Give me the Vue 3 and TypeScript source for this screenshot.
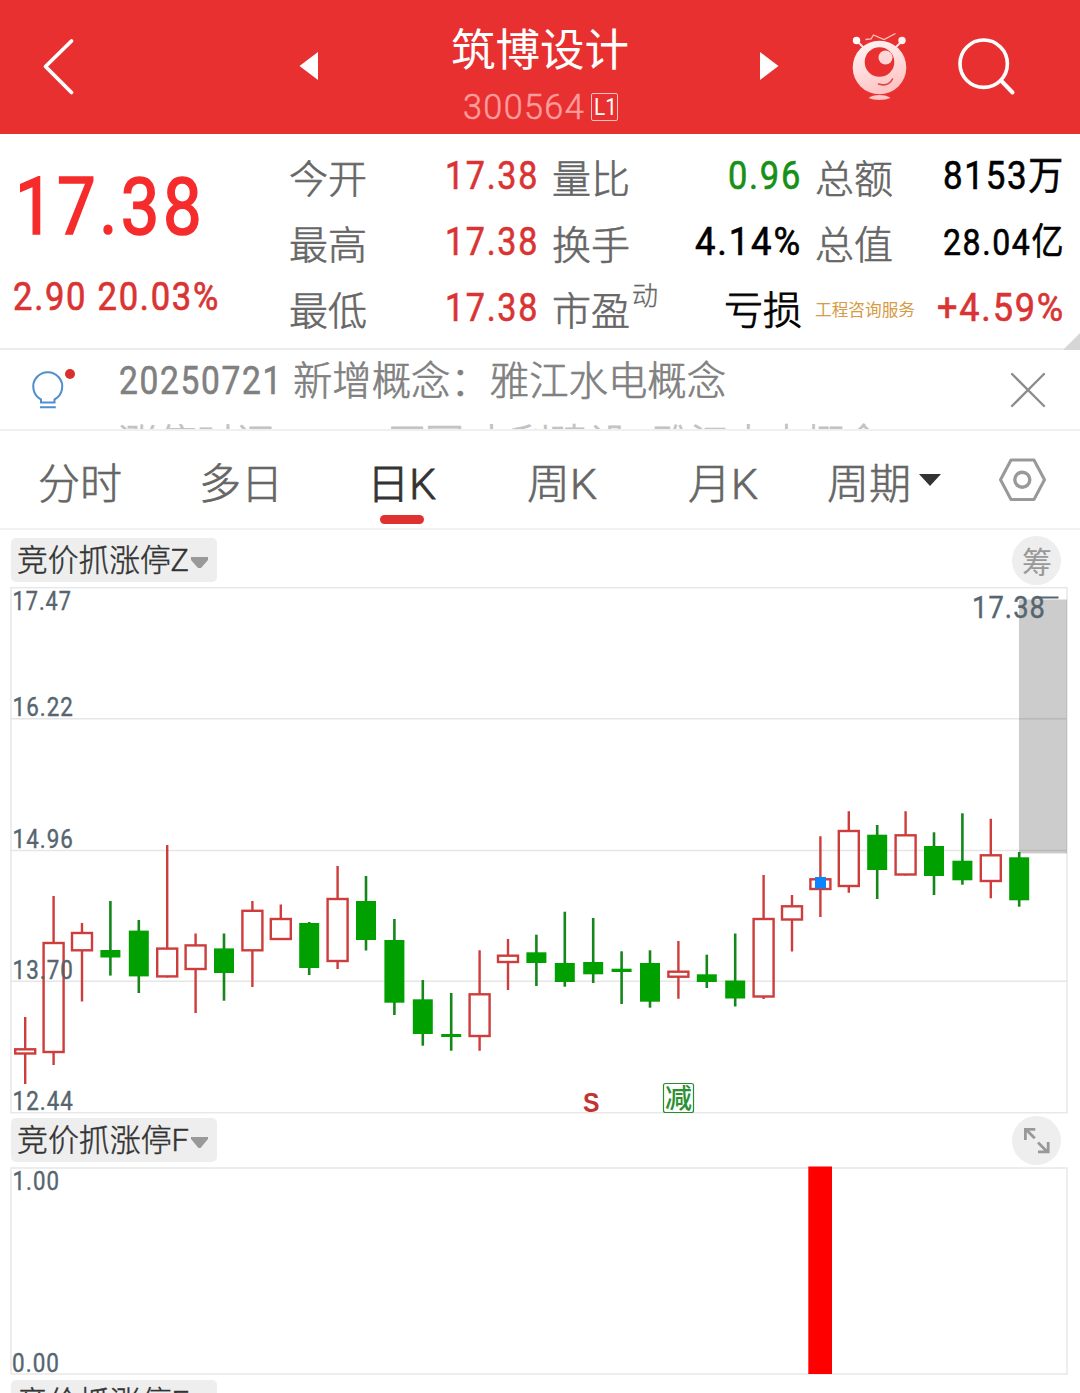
<script setup lang="ts">
import { h } from 'vue'

interface FitProps {
  t: string
  w: number
  h: number
  y: number
  s: number
  wt?: number
  k?: number
  ls?: number
}

// One line of text set to an exact advance width, with baseline y inside a box of w x h.
// k thickens the strokes (in em), ls is the letter spacing (in em).
const Fit = (p: FitProps) =>
  h('svg', { width: p.w, height: p.h, style: 'display:block;flex:none;overflow:visible' }, [
    h('text', {
      x: 0,
      y: p.y,
      'font-size': p.s,
      'font-weight': p.wt ?? 400,
      fill: 'currentColor',
      stroke: p.k ? 'currentColor' : 'none',
      'stroke-width': (p.k ?? 0) * p.s,
      'letter-spacing': (p.ls ?? 0) * p.s,
      textLength: p.w,
      lengthAdjust: 'spacingAndGlyphs',
    }, p.t),
  ])
Fit.props = ['t', 'w', 'h', 'y', 's', 'wt', 'k', 'ls']

interface Stat {
  label: string
  value: string
  w: number
  tone: string
  size?: number
  sup?: string
  tag?: boolean
  cjk?: boolean
}

const columns: Stat[][] = [
  [
    { label: '今开', value: '17.38', w: 94, tone: 'up' },
    { label: '最高', value: '17.38', w: 94, tone: 'up' },
    { label: '最低', value: '17.38', w: 94, tone: 'up' },
  ],
  [
    { label: '量比', value: '0.96', w: 74, tone: 'down' },
    { label: '换手', value: '4.14%', w: 107, tone: 'flat' },
    { label: '市盈', sup: '动', value: '亏损', w: 78, tone: 'flat', cjk: true },
  ],
  [
    { label: '总额', value: '8153万', w: 122, tone: 'flat' },
    { label: '总值', value: '28.04亿', w: 122, tone: 'flat', size: 37 },
    { label: '工程咨询服务', value: '+4.59%', w: 128, tone: 'up', tag: true },
  ],
]

const tabs = [
  { name: '分时', w: 84, left: 38 },
  { name: '多日', w: 84, left: 77 },
  { name: '日K', w: 69, left: 84, active: true },
  { name: '周K', w: 70, left: 91 },
  { name: '月K', w: 70, left: 91 },
  { name: '周期', w: 84, left: 69 },
]

// direction, high, body top, body bottom, low (chart pixel rows)
type Candle = ['r' | 'g', number, number, number, number]
const candles: Candle[] = [
  ['r', 1017, 1048.3, 1054.5, 1084],
  ['r', 896, 942, 1053, 1065],
  ['r', 923, 932, 951.3, 1001.5],
  ['g', 901, 950, 957.5, 975.6],
  ['g', 920, 930.6, 976.4, 993],
  ['r', 845, 947.6, 977.4, 977],
  ['r', 933.5, 944.4, 970, 1013],
  ['g', 933.5, 948.4, 973, 1000.7],
  ['r', 901, 909.8, 951.3, 987],
  ['r', 904.4, 918, 940, 940],
  ['g', 922, 923, 968, 975],
  ['r', 866, 898, 962, 969],
  ['g', 876, 901, 940, 950.5],
  ['g', 919, 940, 1002.7, 1015],
  ['g', 980, 999.3, 1034, 1045.7],
  ['g', 993, 1034, 1037, 1050.7],
  ['r', 950.3, 993.3, 1037, 1050.7],
  ['r', 939, 954.7, 963, 990],
  ['g', 934.7, 952.3, 963, 986],
  ['g', 911.7, 963, 982, 986.7],
  ['g', 918, 962, 974.3, 983],
  ['g', 951.3, 968.7, 972, 1004],
  ['g', 950.3, 963, 1001.7, 1007.7],
  ['r', 941, 970.7, 977.7, 998.7],
  ['g', 954.7, 974.3, 982, 988],
  ['g', 933.5, 980.5, 998.5, 1006.5],
  ['r', 875, 918, 997.5, 999],
  ['r', 895, 905.3, 920.5, 951.5],
  ['r', 836.3, 878.3, 890, 917],
  ['r', 811.3, 830, 887, 892.7],
  ['g', 825, 834.7, 870, 899],
  ['r', 811.3, 834.3, 875.5, 875.5],
  ['g', 832.3, 846, 876, 895],
  ['g', 813.3, 860.7, 880.3, 884.7],
  ['r', 818.7, 854.3, 882, 898.3],
  ['g', 852, 857.3, 900.3, 906.7],
]
const cx = (i: number) => 25.2 + i * 28.4

const prices = [
  { t: '17.47', y: 610, w: 59.5 },
  { t: '16.22', y: 716, w: 61.5 },
  { t: '14.96', y: 848, w: 61.5 },
  { t: '13.70', y: 979, w: 61.5 },
  { t: '12.44', y: 1110, w: 61.5 },
]
</script>

<template>
  <main class="page">
    <header class="top">
      <svg class="back" width="34" height="60" viewBox="42 37 34 60">
        <path d="M71.5 41 45.500 66.500 71.500 92.500" fill="none" stroke="#fff" stroke-width="3.8" stroke-linecap="round" stroke-linejoin="round" />
      </svg>
      <svg class="prev" width="20" height="30" viewBox="0 0 20 30"><path d="M0.500 15 19 1V29Z" fill="#fff" /></svg>
      <div class="title">
        <Fit t="筑博设计" :w="178" :h="78" :y="66" :s="44.500" />
        <div class="code">
          <Fit class="digits" t="300564" :w="122" :h="34" :y="24.500" :s="35" :wt="300" :k="0.015" :ls="0.04" />
          <span class="level"><Fit t="L1" :w="23" :h="26" :y="21" :s="24" /></span>
        </div>
      </div>
      <svg class="next" width="20" height="30" viewBox="0 0 20 30"><path d="M18.500 15 0 1V29Z" fill="#fff" /></svg>
      <svg class="mascot" width="60" height="72" viewBox="850 30 60 72">
        <defs>
          <linearGradient id="skin" x1="0.2" y1="0" x2="0.6" y2="1">
            <stop offset="0" stop-color="#fff4f4" />
            <stop offset="0.5" stop-color="#ffdcdc" />
            <stop offset="1" stop-color="#ffc0c0" />
          </linearGradient>
        </defs>
        <path d="M865.500 39.500 871 39 873.500 35 884 39.500 895.500 33.500" fill="none" stroke="#ffc4c4" stroke-width="1.3" />
        <path d="M857 41 865 49M902 41 894 49" stroke="#ffe4e4" stroke-width="2" />
        <circle cx="856.500" cy="40.500" r="3.700" fill="#fff" />
        <circle cx="902" cy="40.500" r="3.700" fill="#fff0f0" />
        <circle cx="879.500" cy="67.500" r="26.800" fill="url(#skin)" />
        <circle cx="879.500" cy="62" r="14.800" fill="#e83030" />
        <circle cx="885.500" cy="57.500" r="7" fill="#ffd6d6" />
        <path d="M878.500 84Q888.500 87 892.500 79" fill="none" stroke="#d84848" stroke-width="1.600" stroke-linecap="round" />
        <path d="M868.500 98Q872 95 879.500 95T890.500 98Q886 100 879.500 100T868.500 98Z" fill="#ffc4c4" />
      </svg>
      <svg class="search" width="60" height="60" viewBox="956 36 60 60">
        <circle cx="983.700" cy="63.700" r="23.700" fill="none" stroke="#fff" stroke-width="3.600" />
        <path d="M1001 80.500 1012.500 92.500" stroke="#fff" stroke-width="4" stroke-linecap="round" />
      </svg>
    </header>

    <section class="quote">
      <div class="last up">
        <Fit class="big" t="17.38" :w="190" :h="134" :y="99.500" :s="79" :k="0.022" :ls="0.05" />
        <Fit class="chg" t="2.90 20.03%" :w="207" :h="60" :y="42" :s="38.500" :k="0.018" :ls="0.05" />
      </div>
      <div v-for="(col, c) in columns" :key="c" class="col">
        <div v-for="s in col" :key="s.label" class="stat">
          <Fit v-if="s.tag" class="tag" :t="s.label" :w="100" :h="66" :y="39" :s="16.600" />
          <div v-else class="label">
            <Fit :t="s.label" :w="78" :h="66" :y="47.500" :s="39" :wt="300" :k="0.016" />
            <Fit v-if="s.sup" :t="s.sup" :w="26" :h="66" :y="27.500" :s="26" :wt="300" :k="0.012" />
          </div>
          <Fit v-if="s.cjk" :class="s.tone" :t="s.value" :w="s.w" :h="66" :y="47" :s="39" :wt="300" :k="0.022" />
          <Fit v-else :class="s.tone" :t="s.value" :w="s.w" :h="66" :y="44" :s="s.size ?? 39" :k="0.016" :ls="0.05" />
        </div>
      </div>
      <i class="corner"></i>
    </section>

    <section class="notice">
      <svg class="bulb" width="46" height="42" viewBox="31 368 46 42">
        <path d="M41 402.500V399.500A14.500 14.500 0 1 1 54.500 399.500V402.500ZM40 407.200H55.800" fill="none" stroke="#4f8fd0" stroke-width="2" />
        <circle cx="70" cy="374" r="5" fill="#d8302f" />
      </svg>
      <div class="lines">
        <div class="line">
          <Fit class="date" t="20250721" :w="164" :h="50" :y="44" :s="38.500" :k="0.016" :ls="0.05" />
          <Fit t="新增概念：雅江水电概念" :w="433" :h="50" :y="44.500" :s="39.300" :wt="300" :k="0.016" />
        </div>
        <div class="line next-line">
          <Fit class="w1" t="涨停时间" :w="157" :h="50" :y="36.500" :s="39.300" :wt="300" :k="0.022" />
          <Fit class="w2" t="0" :w="22" :h="50" :y="35.500" :s="38.500" />
          <Fit class="w3" t="原因:水利建设" :w="242" :h="50" :y="36.500" :s="39.300" :wt="300" :k="0.022" />
          <Fit class="w4" t="雅江水电概念" :w="231" :h="50" :y="36.500" :s="39.300" :wt="300" :k="0.022" />
        </div>
      </div>
      <svg class="close" width="36" height="36" viewBox="0 0 36 36">
        <path d="M2 2 34 34M34 2 2 34" stroke="#8c8c8c" stroke-width="2.300" stroke-linecap="round" />
      </svg>
    </section>

    <nav class="tabs">
      <div v-for="t in tabs" :key="t.name" class="tab" :class="{ active: t.active }" :style="{ marginLeft: t.left + 'px' }">
        <Fit :t="t.name" :w="t.w" :h="84" :y="68" :s="42" :wt="300" :k="t.active ? 0.022 : 0.015" />
        <i v-if="t.active" class="mark"></i>
      </div>
      <svg class="drop" width="22" height="12" viewBox="0 0 22 12"><path d="M0 0H22L11 12Z" fill="#333" /></svg>
      <svg class="gear" width="48" height="44" viewBox="998 458 48 44">
        <path d="M1011 460H1034L1044.500 479.700 1034 499.500H1011L1000.500 479.700Z" fill="none" stroke="#999" stroke-width="3" stroke-linejoin="round" />
        <circle cx="1022.300" cy="479.700" r="7.500" fill="none" stroke="#999" stroke-width="3.400" />
      </svg>
    </nav>

    <div class="bar first">
      <div class="chip">
        <Fit t="竞价抓涨停Z" :w="172" :h="44" :y="33" :s="31" :wt="300" :k="0.014" />
        <svg width="17" height="11" viewBox="0 0 17 11"><path d="M0 0H17V3L10 11H7L0 3Z" fill="#999" /></svg>
      </div>
      <div class="round"><Fit t="筹" :w="30" :h="49" :y="36.500" :s="30" /></div>
    </div>

    <svg class="chart" width="1080" height="528" viewBox="0 586 1080 528">
      <g stroke="#e6e6e6" stroke-width="1.500">
        <path d="M10 718.700H1067M10 850.500H1067M10 981.300H1067" />
        <rect x="11" y="587.700" width="1056" height="525" fill="none" stroke="#e8e8e8" />
      </g>
      <rect x="1019" y="599.500" width="48" height="254" fill="#000" fill-opacity="0.2" />
      <g v-for="(c, i) in candles" :key="i" :class="c[0] === 'r' ? 'rise' : 'fall'">
        <template v-if="c[0] === 'r'">
          <path :d="`M${cx(i)} ${c[1]}V${c[2] + 1}M${cx(i)} ${c[3] - 1}V${Math.max(c[4], c[3])}`" />
          <rect :x="cx(i) - 10" :y="c[2] + 1" width="20" :height="c[3] - c[2] - 2" />
        </template>
        <template v-else>
          <path :d="`M${cx(i)} ${c[1]}V${c[4]}`" />
          <rect :x="cx(i) - 10" :y="c[2]" width="20" :height="c[3] - c[2]" />
        </template>
      </g>
      <rect x="815" y="877" width="11" height="11.500" fill="#0a84ff" />
      <g class="axis">
        <text v-for="p in prices" :key="p.t" x="12.500" :y="p.y" :textLength="p.w" lengthAdjust="spacingAndGlyphs">{{ p.t }}</text>
        <text x="972" y="618" textLength="74" lengthAdjust="spacingAndGlyphs" font-size="30.500" class="peak">17.38</text>
      </g>
      <path d="M1036 597.500H1058.500" stroke="#56656f" stroke-width="2" />
      <text x="583" y="1111.500" class="sell" textLength="16.500" lengthAdjust="spacingAndGlyphs">S</text>
      <rect x="663.500" y="1083.500" width="30" height="29" rx="2" fill="#fff" stroke="#2a8c2a" stroke-width="1.200" />
      <text x="665" y="1108" class="cut">减</text>
    </svg>

    <div class="bar second">
      <div class="chip">
        <Fit t="竞价抓涨停F" :w="172" :h="44" :y="32.500" :s="31" :wt="300" :k="0.014" />
        <svg width="17" height="11" viewBox="0 0 17 11"><path d="M0 0H17V2L9.500 11H7.500L0 2Z" fill="#999" /></svg>
      </div>
      <div class="round">
        <svg width="49" height="49" viewBox="0 0 49 49">
          <path d="M22.800 22.300 14 13.500M13.400 24V13.400H23.300M26 26.500 35 35.500M36.200 26V35.800H26" fill="none" stroke="#999" stroke-width="2.800" />
        </svg>
      </div>
    </div>

    <svg class="chart" width="1080" height="210" viewBox="0 1166 1080 210">
      <rect x="11" y="1168" width="1056" height="206" fill="none" stroke="#e8e8e8" stroke-width="1.500" />
      <rect x="808.300" y="1166.500" width="23.700" height="207.500" fill="#f00" />
      <g class="axis">
        <text x="12.500" y="1190" textLength="47.500" lengthAdjust="spacingAndGlyphs">1.00</text>
        <text x="12" y="1372" textLength="48" lengthAdjust="spacingAndGlyphs">0.00</text>
      </g>
    </svg>

    <div class="bar third">
      <div class="chip">
        <Fit t="竞价抓涨停F" :w="172" :h="44" :y="32.500" :s="31" :wt="300" :k="0.014" />
      </div>
    </div>
  </main>
</template>

<style>
body {
  background: #fff;
}
</style>

<style scoped>
.page {
  width: 1080px;
  height: 1393px;
  overflow: hidden;
  background: #fff;
  font-family: Roboto, 'Noto Sans CJK SC', sans-serif;
  display: flex;
  flex-direction: column;
}
.page > * {
  flex: none;
  box-sizing: border-box;
}
svg {
  display: block;
  flex: none;
}
.top {
  height: 134px;
  background: #e83030;
  color: #fff;
  display: flex;
}
.back { margin: 37px 0 0 42px; }
.prev { margin: 51px 0 0 223px; }
.title { margin-left: 132px; width: 178px; }
.code { display: flex; margin: 16px 0 0 10px; }
.digits { margin-left: 2px; color: #ff9c9c; }
.level {
  box-sizing: border-box;
  width: 27px;
  height: 28px;
  margin: -1px 0 0 6px;
  padding-left: 2px;
  border: 1px solid #ffc0c0;
  border-radius: 2px;
}
.next { margin: 51px 0 0 131px; }
.mascot { margin: 30px 0 0 70px; }
.search { margin: 36px 0 0 46px; }

.quote {
  position: relative;
  height: 216px;
  border-bottom: 2px solid #ececec;
  display: flex;
}
.last { width: 289px; }
.big { margin-left: 15px; }
.chg { margin-left: 13px; }
.up { color: #d93433; }
.last .big { color: #f62c2c; }
.down { color: #169016; }
.flat { color: #000; }
.col { width: 250px; margin-right: 13px; padding-top: 11px; }
.stat { height: 66px; display: flex; justify-content: space-between; }
.label { display: flex; gap: 2px; color: #666; }
.tag { color: #d79a45; }
.corner {
  position: absolute;
  right: 0;
  bottom: -2px;
  width: 17px;
  height: 17px;
  background: #d6d6d6;
  clip-path: polygon(100% 0, 100% 100%, 0 100%);
}

.notice {
  height: 81px;
  border-bottom: 2px solid #f0f0f0;
  display: flex;
  overflow: hidden;
}
.bulb { margin: 18px 0 0 31px; }
.lines { width: 892px; margin-left: 41px; color: #808080; }
.line { display: flex; height: 71px; gap: 10px; }
.date { margin-left: 1px; }
.next-line { gap: 0; color: #c2c2c2; }
.w2 { margin-left: 10px; }
.w3 { margin-left: 79px; }
.w4 { margin-left: 24px; }
.close { margin-top: 22px; }

.tabs {
  height: 99px;
  border-bottom: 2px solid #f2f2f2;
  display: flex;
  color: #666;
}
.active { color: #333; }
.mark {
  display: block;
  width: 44px;
  height: 9px;
  margin-left: 13px;
  border-radius: 5px;
  background: #e03131;
}
.drop { margin: 43px 0 0 8px; }
.gear { margin: 27px 0 0 57px; }

.bar { display: flex; justify-content: space-between; }
.first { height: 56px; padding-top: 6px; }
.second { height: 52px; padding-top: 2px; }
.third { height: 44px; padding-top: 4px; }
.chip {
  box-sizing: border-box;
  width: 206px;
  height: 44px;
  margin: 2px 0 0 11px;
  padding-left: 6px;
  border-radius: 5px;
  background: #eee;
  color: #333;
  display: flex;
  align-items: center;
  gap: 2px;
}
.third .chip { margin-top: 0; }
.chip svg:last-child { position: relative; top: 2px; }
.third .chip svg:last-child { top: 0; }
.round {
  width: 49px;
  height: 49px;
  margin-right: 19px;
  border-radius: 50%;
  background: #eee;
  color: #999;
  display: flex;
  justify-content: center;
}
.chart { overflow: visible; }
.rise path,
.rise rect {
  fill: none;
  stroke: #cc3d3b;
  stroke-width: 2.4;
}
.fall path { stroke: #14861a; stroke-width: 2.6; }
.fall rect { fill: #00a000; }
.axis {
  fill: #56656f;
  stroke: #56656f;
  stroke-width: 0.4;
  font-size: 25px;
  letter-spacing: 1.2px;
}
.sell { fill: #c23430; font-size: 28px; font-weight: 700; font-family: 'Liberation Sans', sans-serif; }
.cut { fill: #2a9030; font-size: 27px; font-weight: 500; }
</style>
